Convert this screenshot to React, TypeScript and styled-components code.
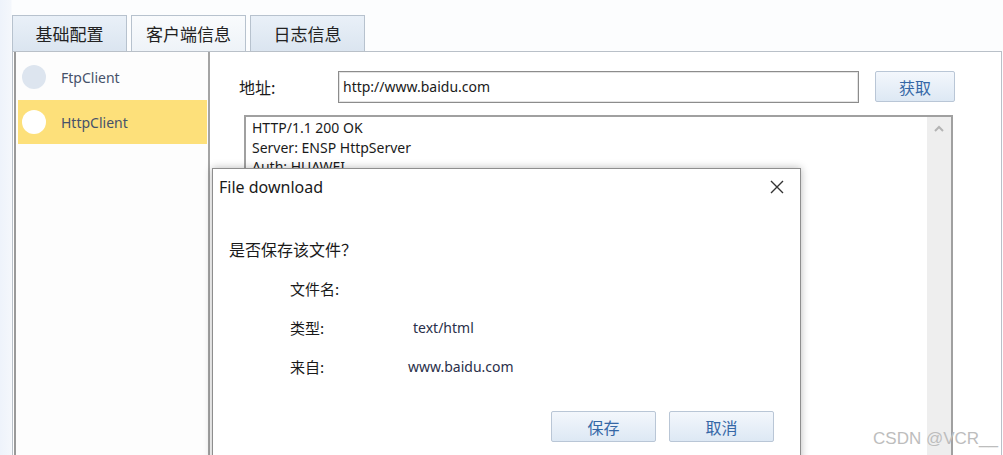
import React from "react";
import styled, { createGlobalStyle } from "styled-components";

const Global = createGlobalStyle`
  html, body { margin: 0; padding: 0; }
  body { background: #ffffff; font-family: "Noto Sans", "Noto Sans CJK SC", sans-serif; }
`;

const Page = styled.div`
  position: relative;
  width: 1003px;
  height: 455px;
  overflow: hidden;
  display: flex;
  flex-direction: column;
  padding: 15px 0 0 12px;
  box-sizing: border-box;
  background: linear-gradient(90deg, #eef3fb 0px, #f4f7fc 11px, #fcfdfe 12px, #fcfdfe 100%);
`;

const TabBar = styled.div`
  display: flex;
  gap: 4px;
  height: 36px;
`;

const Tab = styled.div<{ $active?: boolean }>`
  width: 115px;
  height: 36px;
  box-sizing: border-box;
  border: 1px solid #b7c2ce;
  border-bottom: none;
  background: ${(p) =>
    p.$active
      ? "linear-gradient(#f9fbfd, #eef3f8)"
      : "linear-gradient(#e9f0f8, #dbe5f0)"};
  display: flex;
  align-items: center;
  justify-content: center;
  font-family: "Noto Sans CJK SC", sans-serif;
  font-size: 17px;
  color: #222;
`;

const Panel = styled.div`
  flex: 1;
  display: flex;
  width: 990px;
  box-sizing: border-box;
  border: 1px solid #b9c0c8;
  border-bottom: none;
  background: #fff;
  padding-left: 1px;
`;

const List = styled.div`
  width: 196px;
  box-sizing: border-box;
  border-left: 2px solid #9a9a9a;
  border-right: 2px solid #a4a4a4;
  background: #fdfdfd;
  padding: 3px 1px 0 2px;
  display: flex;
  flex-direction: column;
`;

const Item = styled.div<{ $active?: boolean }>`
  height: 44px;
  display: flex;
  align-items: center;
  gap: 15px;
  padding-left: 4px;
  background: ${(p) => (p.$active ? "#fde07a" : "transparent")};
  font-family: "Noto Sans", sans-serif;
  font-size: 14px;
  color: #46526a;
  & + & {
    margin-top: 1px;
  }
`;

const Dot = styled.span<{ $active?: boolean }>`
  width: 24px;
  height: 24px;
  border-radius: 50%;
  background: ${(p) => (p.$active ? "#ffffff" : "#dde5ef")};
`;

const Content = styled.div`
  flex: 1;
  display: flex;
  flex-direction: column;
  padding: 18px 0 0 29px;
`;

const AddrRow = styled.div`
  display: flex;
  align-items: center;
  height: 33px;
`;

const Label = styled.span`
  width: 99px;
  font-family: "Noto Sans CJK SC", sans-serif;
  font-size: 16px;
  color: #1a1a1a;
`;

const Input = styled.div`
  width: 521px;
  height: 32px;
  box-sizing: border-box;
  border: 1px solid #8c8c8c;
  box-shadow: inset 0 0 0 1px #e4e4e4;
  display: flex;
  align-items: center;
  padding-left: 4px;
  font-family: "Noto Sans", sans-serif;
  font-size: 14px;
  color: #1a1a1a;
`;

const Btn = styled.div<{ $w?: number }>`
  width: ${(p) => p.$w ?? 80}px;
  height: 31px;
  box-sizing: border-box;
  border: 1px solid #b9c6d6;
  border-radius: 2px;
  background: linear-gradient(#f3f7fc, #dde8f4);
  display: flex;
  align-items: center;
  justify-content: center;
  font-family: "Noto Sans CJK SC", sans-serif;
  font-size: 16px;
  color: #3567a6;
`;

const AddrBtn = styled(Btn)`
  margin-left: 16px;
`;

const TextArea = styled.div`
  margin: 12px 0 0 5px;
  width: 709px;
  flex: 1;
  box-sizing: border-box;
  border: 2px solid #a0a0a0;
  border-bottom: none;
  display: flex;
`;

const TextBody = styled.div`
  flex: 1;
  padding: 1px 0 0 6px;
  font-family: "Noto Sans", sans-serif;
  font-size: 14px;
  line-height: 19.5px;
  color: #1a1a1a;
`;

const Scroll = styled.div`
  width: 24px;
  background: #eeeeee;
  display: flex;
  justify-content: center;
  padding-top: 8px;
`;

const Dialog = styled.div`
  position: absolute;
  left: 212px;
  top: 168px;
  width: 589px;
  height: 310px;
  box-sizing: border-box;
  background: #fff;
  border: 1px solid #8e8e8e;
  box-shadow: 0 0 8px rgba(0, 0, 0, 0.28);
  display: flex;
  flex-direction: column;
`;

const TitleBar = styled.div`
  height: 36px;
  display: flex;
  align-items: center;
  justify-content: space-between;
  padding: 0 16px 0 6px;
  font-family: "Noto Sans", sans-serif;
  font-size: 16px;
  color: #1a1a1a;
`;

const Question = styled.div`
  margin: 32px 0 0 16px;
  font-family: "Noto Sans CJK SC", sans-serif;
  font-size: 16px;
  color: #1a1a1a;
`;

const Fields = styled.div`
  margin: 8px 0 0 77px;
  display: flex;
  flex-direction: column;
`;

const Field = styled.div`
  height: 39px;
  display: flex;
  align-items: center;
`;

const FieldLabel = styled.span`
  width: 118px;
  font-family: "Noto Sans CJK SC", sans-serif;
  font-size: 15px;
  color: #1a1a1a;
`;

const FieldValue = styled.span<{ $shift?: number }>`
  margin-left: ${(p) => p.$shift ?? 0}px;
  font-family: "Noto Sans", sans-serif;
  font-size: 14px;
  color: #2a2f4a;
`;

const Actions = styled.div`
  margin-top: 25px;
  display: flex;
  justify-content: flex-end;
  gap: 13px;
  padding-right: 26px;
`;

const Watermark = styled.div`
  position: absolute;
  right: 5px;
  bottom: 6px;
  font-family: "Liberation Sans", sans-serif;
  font-size: 17px;
  color: #bdbdbd;
`;

export default function App() {
  return (
    <>
      <Global />
      <Page>
        <TabBar>
          <Tab>基础配置</Tab>
          <Tab $active>客户端信息</Tab>
          <Tab>日志信息</Tab>
        </TabBar>
        <Panel>
          <List>
            <Item>
              <Dot />
              FtpClient
            </Item>
            <Item $active>
              <Dot $active />
              HttpClient
            </Item>
          </List>
          <Content>
            <AddrRow>
              <Label>地址:</Label>
              <Input>http://www.baidu.com</Input>
              <AddrBtn>获取</AddrBtn>
            </AddrRow>
            <TextArea>
              <TextBody>
                HTTP/1.1 200 OK
                <br />
                Server: ENSP HttpServer
                <br />
                Auth: HUAWEI
              </TextBody>
              <Scroll>
                <svg width="12" height="8" viewBox="0 0 12 8">
                  <path d="M2 6 L6 2 L10 6" fill="none" stroke="#b4b4b4" strokeWidth="2" />
                </svg>
              </Scroll>
            </TextArea>
          </Content>
        </Panel>
        <Dialog>
          <TitleBar>
            File download
            <svg width="14" height="14" viewBox="0 0 14 14">
              <path d="M1 1 L13 13 M13 1 L1 13" stroke="#333" strokeWidth="1.4" />
            </svg>
          </TitleBar>
          <Question>是否保存该文件？</Question>
          <Fields>
            <Field>
              <FieldLabel>文件名:</FieldLabel>
            </Field>
            <Field>
              <FieldLabel>类型:</FieldLabel>
              <FieldValue $shift={5}>text/html</FieldValue>
            </Field>
            <Field>
              <FieldLabel>来自:</FieldLabel>
              <FieldValue>www.baidu.com</FieldValue>
            </Field>
          </Fields>
          <Actions>
            <Btn $w={105}>保存</Btn>
            <Btn $w={105}>取消</Btn>
          </Actions>
        </Dialog>
        <Watermark>CSDN @VCR__</Watermark>
      </Page>
    </>
  );
}
